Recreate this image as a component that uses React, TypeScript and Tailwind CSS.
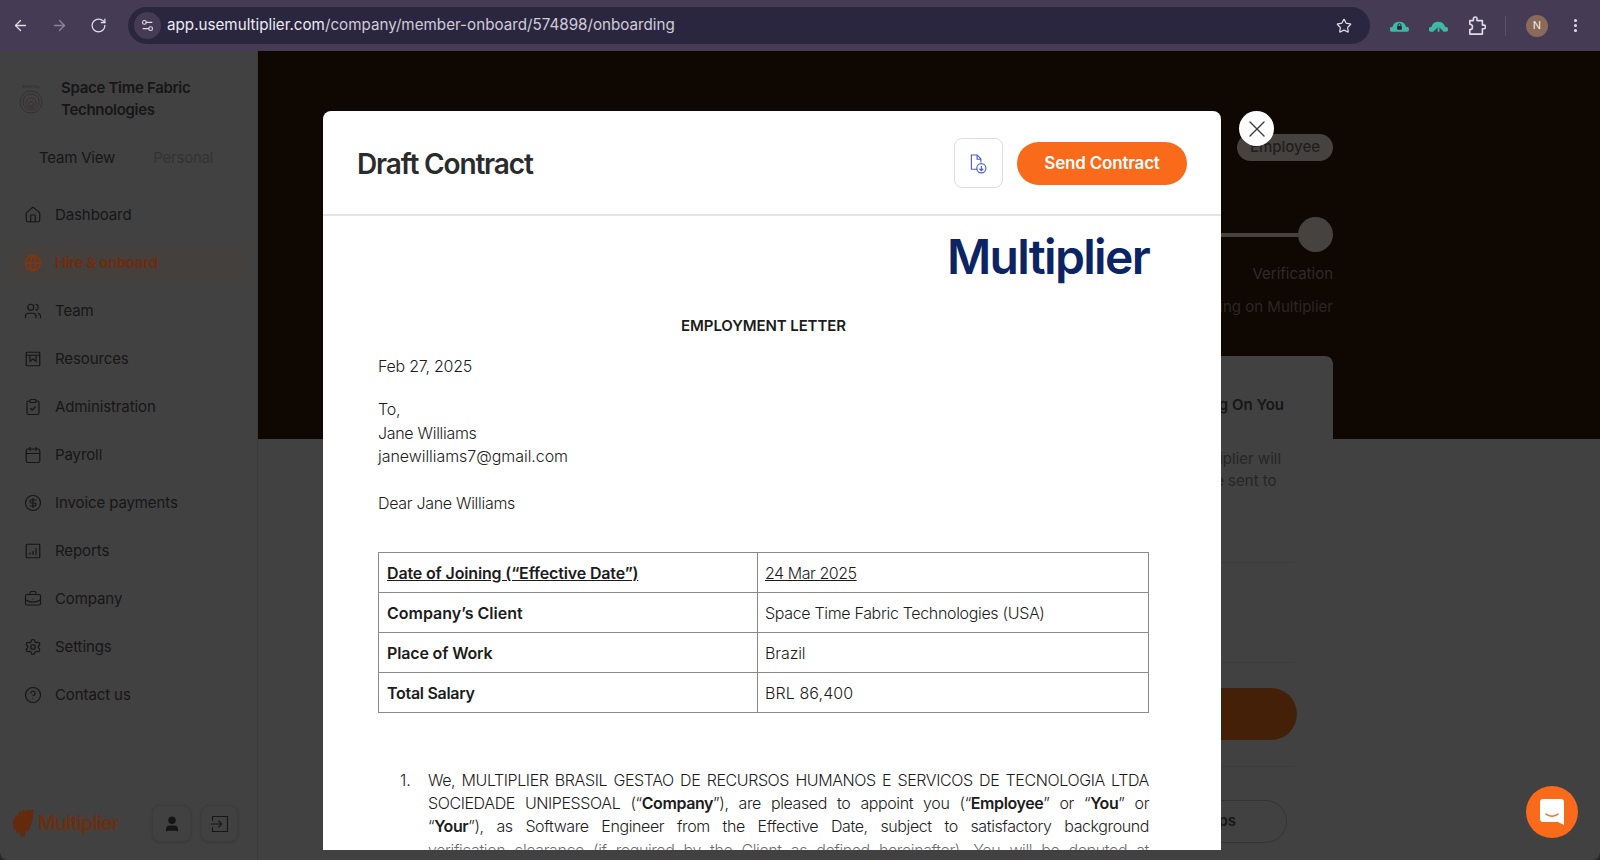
import React from "react";
import { ArrowLeft, ArrowRight, RotateCw, Star, MoreVertical, X, Settings2, Home, Users, ClipboardCheck, Calendar, CircleDollarSign, BriefcaseBusiness, Settings, CircleHelp, Globe, User } from "lucide-react";

type IconProps = { size?: number; strokeWidth?: number; className?: string };

const ResourcesIcon = ({ size = 18, strokeWidth = 1.5, className }: IconProps) => (
  <svg viewBox="0 0 24 24" width={size} height={size} className={className} fill="none" stroke="currentColor" strokeWidth={strokeWidth}>
    <rect x="3" y="3" width="18" height="18" rx="1" />
    <path d="M3 7h18M8 7v8l4-3 4 3V7" />
  </svg>
);

const ReportsIcon = ({ size = 18, strokeWidth = 1.5, className }: IconProps) => (
  <svg viewBox="0 0 24 24" width={size} height={size} className={className} fill="none" stroke="currentColor" strokeWidth={strokeWidth}>
    <rect x="3" y="3" width="18" height="18" rx="1" />
    <path d="M8 17v-3M12 17v-5M16 17V8" />
  </svg>
);

const nav: { label: string; icon: React.ComponentType<IconProps>; active?: boolean }[] = [
  { label: "Dashboard", icon: Home },
  { label: "Hire & onboard", icon: Globe, active: true },
  { label: "Team", icon: Users },
  { label: "Resources", icon: ResourcesIcon },
  { label: "Administration", icon: ClipboardCheck },
  { label: "Payroll", icon: Calendar },
  { label: "Invoice payments", icon: CircleDollarSign },
  { label: "Reports", icon: ReportsIcon },
  { label: "Company", icon: BriefcaseBusiness },
  { label: "Settings", icon: Settings },
  { label: "Contact us", icon: CircleHelp },
];

const rows = [
  { a: "Date of Joining (“Effective Date”)", b: "24 Mar 2025", u: true, ta: "tracking-[-0.15px]", tb: "tracking-[-0.45px]" },
  { a: "Company’s Client", b: "Space Time Fabric Technologies (USA)", u: false, ta: "tracking-[0px]", tb: "tracking-[-0.33px]" },
  { a: "Place of Work", b: "Brazil", u: false, ta: "tracking-[-0.15px]", tb: "tracking-[-0.1px]" },
  { a: "Total Salary", b: "BRL 86,400", u: false, ta: "tracking-[-0.3px]", tb: "tracking-[0.1px]" },
];

function Flame({ className }: { className?: string }) {
  return (
    <svg viewBox="0 0 22 32" className={className} fill="currentColor">
      <path d="M0 14 3 6l1 3 3-7 1 3 3-4 1 3 4-3 1 2 4-2-1 8-2 8-3 7-2-2-2 8-2-3-1 3-2-6-2 2-1-5-2 1-1-5Z" />
    </svg>
  );
}

export default function App() {
  return (
    <div className="h-[860px] w-[1600px] overflow-hidden bg-[#2a2a2a] font-['Inter','Liberation_Sans',sans-serif]">
      <div className="flex h-[51px] items-center bg-[#453b55] text-[#dfdce6]">
        <div className="flex w-[128px] items-center gap-[22px] pl-[12px]">
          <ArrowLeft size={17} strokeWidth={1.8} />
          <ArrowRight size={17} strokeWidth={1.8} className="text-[#8d8698]" />
          <RotateCw size={17} strokeWidth={1.8} />
        </div>
        <div className="flex h-[37px] w-[1242px] items-center rounded-full bg-[#2b2640]">
          <div className="ml-[6px] flex h-[27px] w-[27px] items-center justify-center rounded-full bg-[#453b55]">
            <Settings2 size={15} strokeWidth={1.8} />
          </div>
          <span className="ml-[6px] text-[15.2px] text-[#ecebf1]">
            app.usemultiplier.com<span className="text-[#cfccd8]">/company/member-onboard/574898/onboarding</span>
          </span>
          <Star size={16} strokeWidth={1.8} className="ml-auto mr-[18px]" />
        </div>
        <div className="flex flex-1 items-center pl-[20px]">
          <svg viewBox="0 0 20 12" className="h-[12px] w-[19px]">
            <path d="M2 12a2.500 2.500 0 0 1 .5-5A7.500 7.500 0 0 1 17 7a2.500 2.500 0 0 1 1 5Z" fill="#3fb8a5" />
            <rect x="7.500" y="6" width="5" height="4" rx="0.500" fill="#2b2640" />
            <path d="M8.500 6V5a1.500 1.500 0 0 1 3 0v1" fill="none" stroke="#2b2640" />
          </svg>
          <svg viewBox="0 0 20 12" className="ml-[20px] h-[12px] w-[19px]">
            <path d="M2 12a2.500 2.500 0 0 1 .5-5A7.500 7.500 0 0 1 17 7a2.500 2.500 0 0 1 1 5h-2.500L10 6.500 4.500 12Z" fill="#3fb8a5" />
            <path d="M10 6.500V12" stroke="#3fb8a5" strokeWidth="2" />
          </svg>
          <svg viewBox="0 0 20 22" className="ml-[20px] h-[20px] w-[18px]" fill="none" stroke="#dfdce6" strokeWidth="1.800" strokeLinejoin="round">
            <path d="M2 5h4V3a2 2 0 0 1 4 0v2h6v5h1.500a2 2 0 0 1 0 4H16v6H2v-5a3 3 0 0 0 0-6Z" />
          </svg>
          <div className="ml-[19px] h-[20px] w-px bg-[#5b5269]" />
          <div className="ml-[20px] flex h-[22px] w-[22px] items-center justify-center rounded-full bg-[#8a6a5a] text-[11px] text-[#f1e8e2]">N</div>
          <MoreVertical size={17} strokeWidth={2.4} className="ml-[19px]" />
        </div>
      </div>

      <div className="flex h-[809px] overflow-hidden rounded-b-[8px] bg-[#414141]">
        <aside className="flex w-[258px] shrink-0 flex-col border-r border-[#3b3b3b] text-[#161616]">
          <div className="flex h-[72px] items-center pt-[24px] pl-[16px]">
            <div className="flex w-[30px] flex-col items-center">
              <span className="text-[4px] leading-[6px] text-[#2c2c2c]">KRAETAL</span>
              <svg viewBox="0 0 24 24" className="h-[24px] w-[24px] text-[#363030]" fill="none" stroke="currentColor" strokeWidth="0.9"><circle cx="12" cy="12" r="11" /><circle cx="12" cy="12" r="8" /><circle cx="12" cy="13" r="5" /><circle cx="12" cy="14" r="2.500" /></svg>
            </div>
            <p className="ml-[15px] text-[15px] leading-[22px] font-semibold tracking-[-0.3px]">Space Time Fabric<br />Technologies</p>
          </div>
          <div className="mt-[24px] flex text-[15px] leading-[22px] tracking-[-0.2px]">
            <span className="ml-[39px]">Team View</span>
            <span className="ml-[38px] text-[#333333]">Personal</span>
          </div>
          <nav className="mt-[27px] flex flex-col px-[10px]">
            {nav.map(({ label, icon: Icon, active }) => (
              <div key={label} className={`mb-[10px] flex h-[38px] items-center rounded-[8px] pl-[14px] text-[15px] tracking-[-0.1px] ${active ? "bg-[#43403e] font-bold tracking-[-0.4px] text-[#6e2d0e]" : ""}`}>
                <Icon size={18} strokeWidth={active ? 2.6 : 1.6} className={`shrink-0 ${active ? "text-[#7d3512]" : ""}`} />
                <span className="ml-[13px]">{label}</span>
              </div>
            ))}
          </nav>
          <div className="mt-auto mb-[18px] flex items-center pl-[13px]">
            <Flame className="h-[32px] w-[22px] text-[#642a0d]" />
            <span className="ml-[3px] text-[19.5px] font-semibold tracking-[-0.8px] text-[#6c2f10]">Multiplier</span>
            <div className="ml-auto flex gap-[10px] pr-[19px]">
              <div className="flex h-[37px] w-[39px] items-center justify-center rounded-[8px] border border-[#3c3c3c] shadow-sm"><User size={18} fill="currentColor" /></div>
              <div className="flex h-[37px] w-[37px] items-center justify-center rounded-[8px] border border-[#3c3c3c] shadow-sm">
                <svg viewBox="0 0 24 24" className="h-[20px] w-[20px]" fill="none" stroke="currentColor" strokeWidth="1.300"><path d="M3 3h18v18H3v-5M3 8V3M1 12h13M10 8l4 4-4 4" /></svg>
              </div>
            </div>
          </div>
        </aside>

        <main className="flex min-w-0 flex-1 flex-col">
          <section className="flex h-[388px] shrink-0 flex-col items-end bg-[#0e0702] pr-[267px]">
            <div className="mt-[83px] flex h-[27px] w-[96px] items-center justify-center rounded-full bg-[#45423f] text-[15px] font-medium text-[#1f1e1d]">Employee</div>
            <div className="mt-[56px] flex items-center">
              <div className="h-[4px] w-[90px] bg-[#45423f]" />
              <div className="h-[35px] w-[35px] rounded-full bg-[#45423f]" />
            </div>
            <p className="mt-[11px] text-[15px] text-[#2e2c2a]">Verification</p>
            <p className="mt-[10px] text-[15px] text-[#2a2724]">Onboarding on Multiplier</p>
          </section>
          <section className="-mt-[83px] mr-[267px] ml-auto w-[700px] rounded-t-[8px] bg-[#414141] pt-[38px] pr-[36px] text-[15px]">
            <p className="pr-[13px] text-right leading-[22px] font-semibold text-[#161616]">Everything Depending On You</p>
            <p className="mt-[32px] pl-[555px] leading-[22px] text-[#262626]">Multiplier will<br />to be sent to</p>
            <div className="mt-[70px] mr-[2px] h-px bg-[#3c3c3c]" />
            <div className="mt-[99px] mr-[2px] h-px bg-[#3c3c3c]" />
            <div className="mt-[25px] h-[52px] rounded-full bg-[#452008]" />
            <div className="mt-[26px] mr-[2px] h-px bg-[#3c3c3c]" />
            <div className="mt-[33px] mr-[10px] flex h-[43px] items-center justify-end rounded-full border border-[#353535] pr-[50px] font-semibold text-[#161616]">Next Steps</div>
          </section>
        </main>
      </div>

      <div className="absolute top-[111px] left-[323px] flex h-[739px] w-[898px] flex-col overflow-hidden rounded-t-[8px] bg-white text-[#1c1c1c]">
        <header className="flex h-[105px] shrink-0 items-center justify-between border-b-2 border-[#e4e4e4] pt-[1px] pr-[34px] pl-[34px]">
          <h1 className="mt-[1px] text-[28px] font-semibold tracking-[-1.15px] text-[#2b2b2b]">Draft Contract</h1>
          <div className="flex items-center gap-[14px]">
            <button className="flex h-[50px] w-[49px] items-center justify-center rounded-[8px] border border-[#dedee2]">
              <svg viewBox="0 0 20 22" className="h-[21px] w-[19px] text-[#4a5fcf]" fill="none" stroke="currentColor" strokeWidth="1.200"><path d="M9 17H2.500V2h6l4 4v4M8.500 2v4.500h4" /><circle cx="13" cy="16" r="4.800" /><path d="M13 13.500v5M11 16.500l2 2 2-2" /></svg>
            </button>
            <button className="h-[43px] w-[170px] rounded-full bg-[#f96a1a] pt-[2px] text-[17px] font-semibold tracking-[-0.2px] text-white">Send Contract</button>
          </div>
        </header>
        <div className="relative min-h-0 flex-1 overflow-hidden pr-[72px] pl-[55px] text-[16px] font-light">
          <div className="flex h-[67px] justify-end">
            <span className="mt-[14px] text-[48px] leading-[54px] font-semibold tracking-[-1.7px] text-[#0d2464]">Multiplier</span>
          </div>
          <h2 className="mt-[32px] text-center text-[15px] leading-[22px] font-semibold tracking-[-0.1px]">EMPLOYMENT LETTER</h2>
          <p className="mt-[18px] leading-[23px] tracking-[-0.25px]">Feb 27, 2025</p>
          <p className="mt-[20px] leading-[23.500px]">
            <span className="tracking-[-0.2px]">To,</span><br />
            <span className="tracking-[-0.3px]">Jane Williams</span><br />
            <span className="tracking-[-0.05px]">janewilliams7@gmail.com</span>
          </p>
          <p className="mt-[23px] leading-[23px] tracking-[-0.3px]">Dear Jane Williams</p>
          <table className="mt-[37px] w-[771px] table-fixed border-collapse border border-[#8a8a8a] text-[16px]">
            <tbody>
              {rows.map(({ a, b, u, ta, tb }) => (
                <tr key={a} className="h-[40px]">
                  <td className={`w-[379px] border border-[#8a8a8a] pt-[1px] pl-[8px] font-semibold ${ta} ${u ? "underline" : ""}`}>{a}</td>
                  <td className={`border border-[#8a8a8a] pt-[1px] pl-[7px] ${tb} ${u ? "underline" : ""}`}>{b}</td>
                </tr>
              ))}
            </tbody>
          </table>
          <div className="mt-[56px] flex">
            <span className="w-[50px] pl-[22px] leading-[23.400px]">1.</span>
            <p className="flex-1 text-justify leading-[23.400px] tracking-[-0.4px] [text-align-last:justify]">
              We, MULTIPLIER BRASIL GESTAO DE RECURSOS HUMANOS E SERVICOS DE TECNOLOGIA LTDA<br />
              SOCIEDADE UNIPESSOAL (“<b className="font-semibold">Company</b>”), are pleased to appoint you (“<b className="font-semibold">Employee</b>” or “<b className="font-semibold">You</b>” or<br />
              “<b className="font-semibold">Your</b>”), as Software Engineer from the Effective Date, subject to satisfactory background<br />
              verification clearance (if required by the Client as defined hereinafter). You will be deputed at
            </p>
          </div>
          <div className="pointer-events-none absolute inset-x-0 bottom-0 h-[20px] bg-gradient-to-b from-transparent to-white/40" />
        </div>
      </div>

      <button className="absolute top-[111px] left-[1239px] flex h-[35px] w-[35px] items-center justify-center rounded-full bg-white text-[#3a3a3a]"><X size={28} strokeWidth={1.2} /></button>

      <div className="absolute top-[786px] left-[1526px] flex h-[52px] w-[52px] items-center justify-center rounded-full bg-[#f96a1a]">
        <svg viewBox="0 0 24 26" className="h-[26px] w-[24px]"><path d="M3 0h18a3 3 0 0 1 3 3v23l-6-3H3a3 3 0 0 1-3-3V3a3 3 0 0 1 3-3Z" fill="#fff" /><path d="M6 15c3 3 9 3 12 0" fill="none" stroke="#f96a1a" strokeWidth="1.500" strokeLinecap="round" /></svg>
      </div>
    </div>
  );
}
